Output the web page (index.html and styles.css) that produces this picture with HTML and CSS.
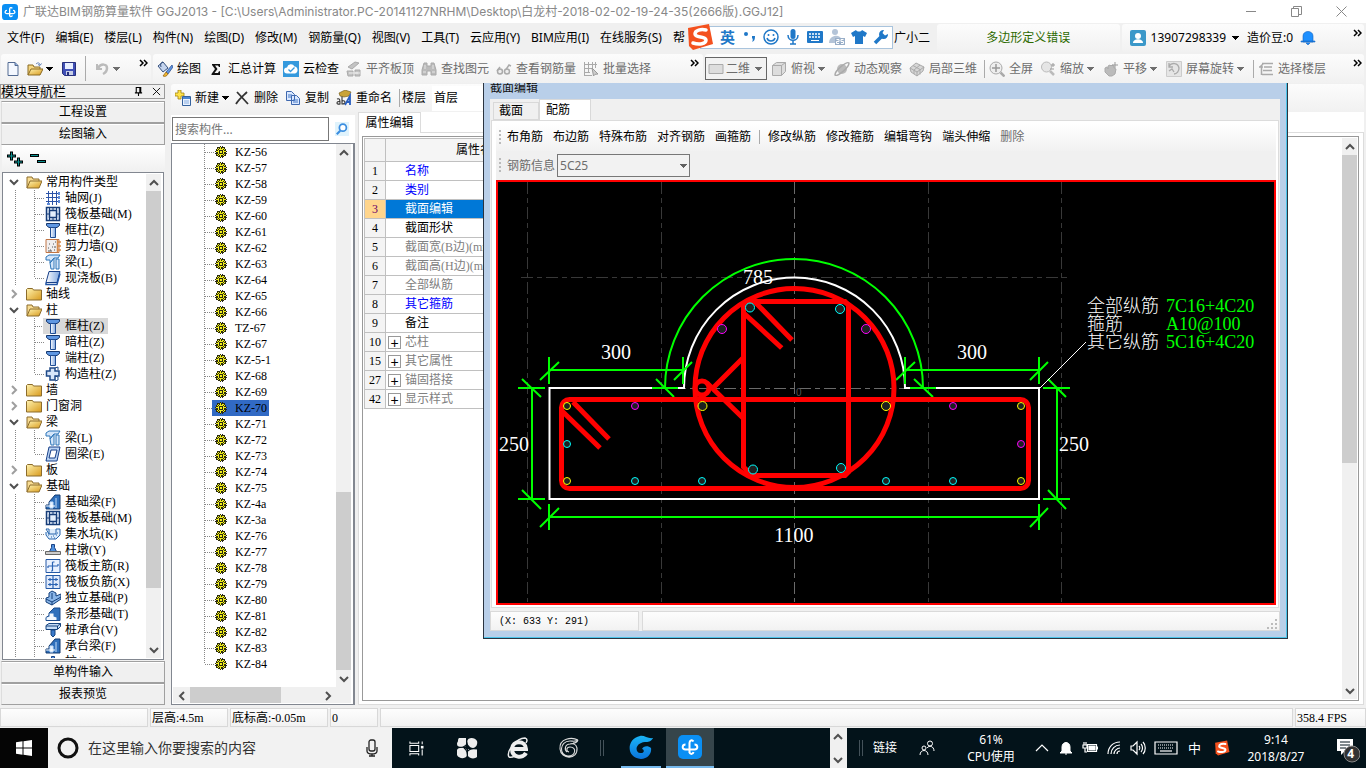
FILE: index.html
```html
<!DOCTYPE html>
<html lang="zh-CN">
<head>
<meta charset="utf-8">
<title>广联达BIM钢筋算量软件 GGJ2013</title>
<link rel="stylesheet" href="styles.css">
</head>
<body>
<svg class="defs" aria-hidden="true">
<defs>
<linearGradient id="gold" x1="0" y1="0" x2="1" y2="1"><stop offset="0" stop-color="#fff3b0"/><stop offset="1" stop-color="#d89a1c"/></linearGradient>
<linearGradient id="steel" x1="0" y1="0" x2="1" y2="0"><stop offset="0" stop-color="#fff"/><stop offset="1" stop-color="#7ea6e0"/></linearGradient>
<linearGradient id="sky" x1="0" y1="0" x2="0" y2="1"><stop offset="0" stop-color="#1ab4f5"/><stop offset="1" stop-color="#0a74dc"/></linearGradient>
</defs>
<symbol id="app" viewBox="0 0 24 24"><rect width="24" height="24" rx="5" fill="#0a8ff4"/><path d="M15.500 6.500c-1.500-2-4-1.200-4 1.500v10M7.500 9.500c-3.500 0-4 5 0 5h9c4 0 3.500-5 0-5M11.500 17c.3 2.500 3.500 2.500 4 0" fill="none" stroke="#fff" stroke-width="2"/></symbol>
<symbol id="new" viewBox="0 0 16 16"><path d="M3 1.500h7l3 3v10H3z" fill="#f4f8ff" stroke="#526a92"/><path d="M10 1.500v3h3" fill="#8fb0e0" stroke="#526a92"/></symbol>
<symbol id="open" viewBox="0 0 16 16"><path d="M1 14V4h5l1 2h6v3" fill="#f5d680" stroke="#8a6a22"/><path d="M1 14l3-6h12l-3 6z" fill="url(#gold)" stroke="#8a6a22"/><path d="M9 3c2-2 4-1 4 1m-2-.5l2 1 1.500-2" fill="none" stroke="#5d7fb8"/></symbol>
<symbol id="save" viewBox="0 0 16 16"><path d="M1.500 1.500h13v13h-11l-2-2z" fill="#3f4fb5" stroke="#27307c"/><path d="M4 2h8v6H4z" fill="#e8efff"/><path d="M5 10h7v4H5z" fill="#c8cfe6"/><path d="M6 11h2v3H6z" fill="#27307c"/></symbol>
<symbol id="undo" viewBox="0 0 16 16"><path d="M3 3v5h5" fill="none" stroke="#bbb" stroke-width="2"/><path d="M4 7c3-5 9-4 9 0 0 3-2 5-4 6" fill="none" stroke="#bbb" stroke-width="2.500"/></symbol>
<symbol id="bucket" viewBox="0 0 16 16"><path d="M1 5l5-4 5 6-5 4z" fill="#c4d4ee" stroke="#35507e"/><path d="M6 1c-2 0-3 2-2 5" fill="none" stroke="#35507e"/><path d="M15 4l-6 7 2 2 5-7z" fill="#5f94e0" stroke="#24488a" stroke-width=".7"/><path d="M9 11l-3 4c2 1 4 0 5-2z" fill="#f0b830" stroke="#8a5a10" stroke-width=".7"/></symbol>
<symbol id="sigma" viewBox="0 0 16 16"><path d="M4 3h8v3h-1L10 4.500H7L9.500 8 6.500 12H10l1-1.700h1V14H3.500v-1L7 8 4 4z" fill="#111"/></symbol>
<symbol id="cloud" viewBox="0 0 16 16"><path d="M0 0h16v16H0z" fill="#3499dd"/><path d="M4 12.500a3 3 0 010-6 4 4 0 017.500-1A3.600 3.600 0 0112 12.500z" fill="#fff"/><path d="M5.500 8.500l2 2 4-4" fill="none" stroke="#3499dd" stroke-width="1.300"/></symbol>
<symbol id="gslab" viewBox="0 0 16 16"><path d="M2 6l7-5 4 1-7 6zM1 10h6v5H2zM9 9h5v6H9z" fill="#c3c3c3" stroke="#aaa"/><path d="M3 12h9M9 12h5" stroke="#eee"/></symbol>
<symbol id="gbino" viewBox="0 0 16 16"><path d="M3 2h3v3h4V2h3l2 7v5h-5v-4H6v4H1V9z" fill="#bbb" stroke="#aaa"/><path d="M2 11h3M11 11h3M4 4v4M12 4v4" stroke="#e5e5e5"/></symbol>
<symbol id="gglass" viewBox="0 0 16 16"><path d="M1 10l3-4M9 10l4-6 2 1" fill="none" stroke="#aaa" stroke-width="1.500"/><circle cx="4" cy="10.500" r="2.500" fill="#eee" stroke="#aaa" stroke-width="1.500"/><circle cx="11" cy="10.500" r="2.500" fill="#eee" stroke="#aaa" stroke-width="1.500"/></symbol>
<symbol id="gsel" viewBox="0 0 16 16"><path d="M1.500 1v14M5.500 1v10M9.500 1v6M1 3.500h13M1 7.500h9M1 11.500h6M12.500 1v6M1 14.500h8" fill="none" stroke="#aaa"/><path d="M9 7l6 6-3 .3L10.500 15z" fill="#ccc" stroke="#999"/></symbol>
<symbol id="grect" viewBox="0 0 16 16"><path d="M1 3.500h14v9H1z" fill="#ddd" stroke="#aaa"/></symbol>
<symbol id="gcube" viewBox="0 0 16 16"><path d="M1.500 4.500l4-3h9v9l-4 4h-9z" fill="#ddd" stroke="#aaa"/><path d="M1.500 4.500h9v10M10.500 4.500l4-3" fill="none" stroke="#aaa"/></symbol>
<symbol id="gorb" viewBox="0 0 16 16"><circle cx="8" cy="8" r="5" fill="#bbb"/><path d="M1 14c2 2 14-7 14-12-2-2-14 7-14 12z" fill="none" stroke="#aaa" stroke-width="1.500"/></symbol>
<symbol id="g3d" viewBox="0 0 16 16"><path d="M1 7l6-5 8 4-1 4-6 5-6-4z" fill="#d6d6d6" stroke="#aaa"/><path d="M4 4.500l7 4 0 5M1 7l7 4 7-5M8 11v4M11 4L5 9v4" fill="none" stroke="#aaa"/></symbol>
<symbol id="gfull" viewBox="0 0 16 16"><circle cx="7" cy="7" r="6" fill="#eee" stroke="#aaa"/><path d="M7 3v8M3 7h8" stroke="#999" stroke-width="1.500"/><path d="M11.500 11.500l4 4" stroke="#aaa" stroke-width="2.500"/></symbol>
<symbol id="gzoom" viewBox="0 0 16 16"><circle cx="6.500" cy="6" r="5" fill="#e5e5e5" stroke="#bbb"/><path d="M10 10l4 4" stroke="#bbb" stroke-width="2.500"/><path d="M11 4h4M13 2v4M10 8h4" stroke="#999"/></symbol>
<symbol id="ghand" viewBox="0 0 16 16"><path d="M2 7l2-1 1 2V5l2-1 1 1 1-1 2 1v2l2 1-1 5-3 2H6l-4-4z" fill="#bbb" stroke="#aaa"/><path d="M12 1v6M9 4h6" stroke="#999"/></symbol>
<symbol id="grot" viewBox="0 0 16 16"><path d="M.5.500h15v15H.5z" fill="#e5e5e5" stroke="#ccc"/><path d="M3 5c3-4 9-3 10 2 0 3-2 6-5 6M3 2v4h4M3 10l3-2 2 3" fill="none" stroke="#aaa" stroke-width="1.300"/></symbol>
<symbol id="gfloor" viewBox="0 0 16 16"><path d="M4 2.500h11M6 6h8M5 9.500h9M4 13.500h11M2 6l3-3M3.500 6v8M1 6h4" fill="none" stroke="#aaa" stroke-width="1.500"/></symbol>
<symbol id="add" viewBox="0 0 16 16"><path d="M3 0h3v3h3v3H6v3H3V6H0V3h3z" fill="#ffe34a" stroke="#a28410" stroke-width=".8"/><path d="M7.500 6.500h8v9h-8z" fill="#eaf2ff" stroke="#35629e"/><path d="M8 7h7v2H8z" fill="#4c86d2"/><path d="M9 11h5M9 13h5" stroke="#88aee0"/></symbol>
<symbol id="del" viewBox="0 0 16 16"><path d="M3 2l11 12M13 2C9 6 5 9 2 14" fill="none" stroke="#333" stroke-width="1.800"/></symbol>
<symbol id="copy" viewBox="0 0 16 16"><path d="M1.500 1.500h5l3 3v6h-8zM6.500 5.500h5l3 3v6h-8z" fill="#dbe9ff" stroke="#3f68ae"/><path d="M3 5h4M3 7h3M8 10h5M8 12h5" stroke="#4779c5"/></symbol>
<symbol id="ren" viewBox="0 0 16 16"><path d="M3 3l6-3 6 2-2 4-5 1-4-1z" fill="#c9a338" stroke="#6a5418" stroke-width=".6"/><path d="M1 9c3-1 3 1 3 5-4 1-4-3 0-2.500M6 6.500V14c4 .5 4-4.500 0-3" fill="none" stroke="#333" stroke-width="1.100"/><path d="M9 15l5-9v9M10.500 12H14" fill="none" stroke="#2a5fc0" stroke-width="1.800"/></symbol>
<symbol id="find" viewBox="0 0 16 16"><path d="M0 0h16v16H0z" fill="#e0f3fc"/><circle cx="9" cy="6.500" r="4" fill="#fff" stroke="#3b8ee0" stroke-width="2"/><path d="M6 10l-4 4" stroke="#3b8ee0" stroke-width="2.500"/></symbol>
<symbol id="fopen" viewBox="0 0 16 16"><path d="M1 14V3h5l1 2h6v3" fill="#f8dc92" stroke="#8c6c2c"/><path d="M1 14l3-7h12l-3 7z" fill="url(#gold)" stroke="#8c6c2c"/></symbol>
<symbol id="fclosed" viewBox="0 0 16 16"><path d="M.5 3.500l1-1h5l1 1.500h8v10H.5z" fill="url(#gold)" stroke="#8c6c2c"/></symbol>
<symbol id="grid" viewBox="0 0 16 16"><path d="M3.500 1v14M7.500 1v14M11.500 1v14M1 3.500h14M1 7.500h14M1 11.500h14" stroke="#2d54a8"/><path d="M13 2h2v3h-2zM13 6h2v3h-2zM13 10h2v3h-2zM2 13h3v2H2z" fill="#5d8ad8"/></symbol>
<symbol id="raft" viewBox="0 0 16 16"><path d="M1.500 1.500h13v13h-13zM4.500 4.500h7v7h-7z" fill="#e4eefb" stroke="#173d78" stroke-width="1.500"/><path d="M4.500 1v3M8 1v3M11.500 1v3M4.500 12v3M8 12v3M11.500 12v3M1 8h3M12 8h3" stroke="#173d78"/></symbol>
<symbol id="col" viewBox="0 0 16 16"><path d="M1.500 1.500h13v2L12 5.500H4l-2.500-2z" fill="#5f97e2" stroke="#16386f"/><path d="M5.500 5.500h5v10h-5z" fill="url(#steel)" stroke="#1f4d94"/></symbol>
<symbol id="wall" viewBox="0 0 16 16"><path d="M1 1.500h13v13H1z" fill="#f1eeee" stroke="#c07545"/><path d="M12.500 2v12M13 4h3M13 8h3M13 12h3" stroke="#d88a4a" stroke-width="1.500"/><path d="M3 10h1M5 12h1M7 9h1M9 12h1M4 6h1M8 6h1M10 4h1M3 13h4M9 9h2" stroke="#555"/></symbol>
<symbol id="beam" viewBox="0 0 16 16"><path d="M1 3l3-2h11l-2 3H9L5 9V6H1zM5 9l4-5v11H6zM11 5h3v10h-3z" fill="#d4e6fa" stroke="#2d75b8"/></symbol>
<symbol id="slab" viewBox="0 0 16 16"><path d="M4 1.500h11l-3 11H1z" fill="url(#steel)" stroke="#173f88"/><path d="M1 12.500v2h11l3-11" fill="none" stroke="#2054a5" stroke-width="1.500"/></symbol>
<symbol id="cross" viewBox="0 0 16 16"><path d="M5 2h5v3h4v5h-4v4H5v-4H1.500V5H5z" fill="#d8e6fa" stroke="#1f4a88" stroke-width="1.500"/><path d="M10 2l3-1v3M10 10l3 1v3l-3 1" fill="none" stroke="#1f4a88"/></symbol>
<symbol id="ring" viewBox="0 0 16 16"><path d="M4 1h11l-3 14H1z" fill="#b9d3f4" stroke="#173f88"/><path d="M6 4h6l-2 8H4z" fill="#fff" stroke="#173f88"/></symbol>
<symbol id="fbeam" viewBox="0 0 16 16"><path d="M1 15v-4h3V8l6-7h5v14z" fill="#2f70bc" stroke="#123a70"/><path d="M5 8h3v6H5zM11 4v10" fill="#e8f3ff" stroke="#c7dffa"/><path d="M1 12h9" stroke="#fff"/></symbol>
<symbol id="pit" viewBox="0 0 16 16"><path d="M1 3h3v5h7V3h4M1 6v3l3 4h7l4-4V3M4 8L1 3" fill="#ddecfb" stroke="#2665ad"/><path d="M3 9h1M6 11h1M8 10h1M11 9h1M9 12h1M12 7h1" stroke="#2665ad"/></symbol>
<symbol id="pier" viewBox="0 0 16 16"><path d="M6.500 2.500h3v3l2 4h-7l2-4z" fill="#4f90de" stroke="#1a4386"/><path d="M.5 9.500h15v3H.5z" fill="#ccc" stroke="#666"/></symbol>
<symbol id="rmain" viewBox="0 0 16 16"><path d="M1 1.500h14v13H1z" fill="#e9f1ff" stroke="#2459a6"/><path d="M7.500 4v9M7.500 4h2M3 8h10M3 8v2M13 8V6M7.500 13H6" fill="none" stroke="#2a63b4" stroke-width="1.200"/></symbol>
<symbol id="rneg" viewBox="0 0 16 16"><path d="M1 1.500h14v13H1z" fill="#dfe9fa" stroke="#2459a6"/><path d="M8 2v12M3 5.500h10M3 10.500h10M5 4v3M11 4v3M5 9v3M11 9v3" fill="none" stroke="#2a63b4" stroke-width="1.200"/></symbol>
<symbol id="iso" viewBox="0 0 16 16"><path d="M1 8l3-1V3l3-2 4 2v3l5-2v5l-9 6-6-3z" fill="#8ab6e8" stroke="#123e7a"/><path d="M1 9l6 3 9-5M7 12v3M7 3v6" fill="none" stroke="#123e7a"/></symbol>
<symbol id="strip" viewBox="0 0 16 16"><path d="M1 14.500v-3l3-2V7l5-5h6v12.500z" fill="#2f70bc" stroke="#1b4a8b"/><path d="M1.500 14v-2.500l3-1V7.500h4v3l3 1V14z" fill="#f2f8ff"/></symbol>
<symbol id="pile" viewBox="0 0 16 16"><path d="M1 3.500l3-2h11.500v3l-3 3H1z" fill="#c5dcf6" stroke="#14437f"/><path d="M1 4h11.500l3-2.500M12.500 4v3" fill="none" stroke="#14437f"/><path d="M6 8h4v5l-2 2-2-2z" fill="#3a7aca" stroke="#14437f"/></symbol>
<symbol id="gear" viewBox="0 0 12 12"><g shape-rendering="crispEdges"><path d="M3 1h2V0h1v1h1V0h1v1h2v2h1v2h1v1h-1v1h1v1h-1v2H9v1H8v1H7v-1H6v1H5v-1H3v-1H1V8H0V7h1V6H0V5h1V3h1V1z" fill="#2a2a10"/><path d="M3 2h1v1H3zM5 1h1v2H5zM7 2h2v1H7zM1 5h2v1H1zM9 5h2v1H9zM2 3h1v1H2zM9 3h1v1H9zM3 4h1v4H3zM8 4h1v4H8zM4 3h4v1H4zM4 8h4v1H4zM5 9h1v2H5zM2 8h1v1H2zM9 8h1v1H9zM3 9h1v1H3zM8 9h1v1H8zM5 5h2v2H5z" fill="#f2f01c"/></g></symbol>
<symbol id="up" viewBox="0 0 10 10"><path d="M1 7l4-4 4 4" fill="none" stroke="#505050" stroke-width="2"/></symbol>
<symbol id="down" viewBox="0 0 10 10"><path d="M1 3l4 4 4-4" fill="none" stroke="#505050" stroke-width="2"/></symbol>
<symbol id="left" viewBox="0 0 10 10"><path d="M7 1L3 5l4 4" fill="none" stroke="#505050" stroke-width="2"/></symbol>
<symbol id="right" viewBox="0 0 10 10"><path d="M3 1l4 4-4 4" fill="none" stroke="#505050" stroke-width="2"/></symbol>
<symbol id="more" viewBox="0 0 9 8"><path d="M1 1l3 3-3 3M5 1l3 3-3 3" fill="none" stroke="#000" stroke-width="1.500"/></symbol>
<symbol id="sogou" viewBox="0 0 28 28"><path d="M2 5l21-4 4 20-20 6-4-4z" fill="#f4511e"/><path d="M20 7c-5-1-11 0-11 4s11 2 11 6-7 5-13 3" fill="none" stroke="#fff" stroke-width="3.500" stroke-linecap="round"/></symbol>
</svg>

<header class="titlebar">
<svg class="ic"><use href="#app"/></svg>
<h1>广联达BIM钢筋算量软件 GGJ2013 - [C:\Users\Administrator.PC-20141127NRHM\Desktop\白龙村-2018-02-02-19-24-35(2666版).GGJ12]</h1>
<div class="winbtns">
<button aria-label="最小化"><svg viewBox="0 0 11 11"><path d="M0 5.500h10" stroke="#888"/></svg></button>
<button aria-label="还原"><svg viewBox="0 0 11 11"><path d="M.5 2.500h7v8h-7zM2.500 2.500v-2h8v8h-3" fill="none" stroke="#888"/></svg></button>
<button aria-label="关闭"><svg viewBox="0 0 11 11"><path d="M.5.500l10 10M10.500.500l-10 10" stroke="#888"/></svg></button>
</div>
</header>

<div class="menubar">
<nav class="menu"><button>文件(F)</button><button>编辑(E)</button><button>楼层(L)</button><button>构件(N)</button><button>绘图(D)</button><button>修改(M)</button><button>钢筋量(Q)</button><button>视图(V)</button><button>工具(T)</button><button>云应用(Y)</button><button>BIM应用(I)</button><button>在线服务(S)</button><button aria-label="帮助">帮</button></nav>
<button class="xiaoer">广小二</button>
<div class="band notice">多边形定义错误</div>
<div class="band account">
<svg class="ic"><rect width="16" height="16" rx="2" fill="#3b98c9"/><circle cx="8" cy="6" r="3" fill="#fff"/><path d="M3 13c0-5 10-5 10 0z" fill="#fff"/></svg>
<button>13907298339<i class="arr"></i></button><span>造价豆:0</span>
<svg class="ic bell"><path d="M3 12V6c0-6 10-6 10 0v6zM1 11h14v1H1zM6 13h4l-2 2z" fill="#1e90ff" stroke="#1565c0" stroke-width=".6"/></svg>
<button class="morebtn" aria-label="更多"><svg><use href="#more"/></svg></button>
</div>
<div class="ime">
<svg class="logo"><use href="#sogou"/></svg>
<b>英</b>
<svg viewBox="0 0 16 16"><circle cx="5" cy="5" r="2"/><path d="M11 7h3c0 4-1 5-3 6 1-2 1-3 0-4z"/></svg>
<svg viewBox="0 0 16 16"><circle cx="8" cy="8" r="7" fill="none" stroke="#1f78c8" stroke-width="1.500"/><circle cx="5.500" cy="6" r="1"/><circle cx="10.500" cy="6" r="1"/><path d="M4 9c1 4 7 4 8 0" fill="none" stroke="#1f78c8" stroke-width="1.500"/></svg>
<svg viewBox="0 0 16 16"><rect x="5.500" y="0" width="5" height="10" rx="2.500"/><path d="M3 6c0 7 10 7 10 0M8 11v4M5 15h6" fill="none" stroke="#1f78c8" stroke-width="1.500"/></svg>
<svg viewBox="0 0 16 16"><rect x="0" y="2" width="16" height="12" rx="1"/><path d="M2 5h12M2 8h12" stroke="#fff" stroke-dasharray="2 1" stroke-width="1.500"/><path d="M4 11.500h8" stroke="#fff"/></svg>
<svg viewBox="0 0 16 16"><circle cx="6" cy="3" r="3" fill="#b4c4d8"/><path d="M0 14c0-9 12-9 12-4v4z" fill="#b4c4d8"/><path d="M6 9h10v7H6z" fill="#98aec8"/><path d="M7.500 10.500H10v2H7.500v2H10M14.500 10.500H12v2h2.500v2H12" fill="none" stroke="#fff"/></svg>
<svg viewBox="0 0 16 16"><path d="M5 1c1 2 5 2 6 0l5 3-2 4-2-1v8H4V7L2 8 0 4z"/></svg>
<svg viewBox="0 0 16 16"><path d="M2 14l7-7" stroke="#1f78c8" stroke-width="3.500"/><path d="M15 5a4.500 4.500 0 11-4-4L9.500 4 12 6.500z"/></svg>
</div>
</div>

<div class="toolbars">
<div class="band tb1">
<button aria-label="新建"><svg class="ic"><use href="#new"/></svg></button><button aria-label="打开"><svg class="ic"><use href="#open"/></svg><i class="arr"></i></button><button aria-label="保存"><svg class="ic"><use href="#save"/></svg></button><span class="vs"></span><button class="dim" aria-label="撤销"><svg class="ic"><use href="#undo"/></svg><i class="arr"></i></button><button class="morebtn" aria-label="更多"><svg><use href="#more"/></svg></button>
</div>
<div class="band tb2">
<button class="tool"><svg class="ic"><use href="#bucket"/></svg>绘图</button><button class="tool"><svg class="ic"><use href="#sigma"/></svg>汇总计算</button><button class="tool"><svg class="ic"><use href="#cloud"/></svg>云检查</button><button class="tool dim"><svg class="ic"><use href="#gslab"/></svg>平齐板顶</button><button class="tool dim"><svg class="ic"><use href="#gbino"/></svg>查找图元</button><button class="tool dim"><svg class="ic"><use href="#gglass"/></svg>查看钢筋量</button><button class="tool dim"><svg class="ic"><use href="#gsel"/></svg>批量选择</button><button class="morebtn" aria-label="更多"><svg><use href="#more"/></svg></button>
</div>
<div class="band tb3">
<label class="view dim"><svg class="ic"><use href="#grect"/></svg><select aria-label="视图模式"><option>二维</option></select><i class="arr"></i></label><button class="tool dim"><svg class="ic"><use href="#gcube"/></svg>俯视<i class="arr"></i></button><button class="tool dim"><svg class="ic"><use href="#gorb"/></svg>动态观察</button><button class="tool dim"><svg class="ic"><use href="#g3d"/></svg>局部三维</button><span class="vs"></span><button class="tool dim"><svg class="ic"><use href="#gfull"/></svg>全屏</button><button class="tool dim"><svg class="ic"><use href="#gzoom"/></svg>缩放<i class="arr"></i></button><button class="tool dim"><svg class="ic"><use href="#ghand"/></svg>平移<i class="arr"></i></button><button class="tool dim"><svg class="ic"><use href="#grot"/></svg>屏幕旋转<i class="arr"></i></button><span class="vs"></span><button class="tool dim last"><svg class="ic"><use href="#gfloor"/></svg>选择楼层</button><button class="morebtn" aria-label="更多"><svg><use href="#more"/></svg></button>
</div>
</div>

<main class="work">
<aside class="nav">
<div class="navhead"><span>模块导航栏</span><button aria-label="固定"><svg viewBox="0 0 10 10"><path d="M2.500 6V.5h5V6M1 6.500h8M5 7v3M6.500 1v5" fill="none" stroke="#000" stroke-width="1.200"/></svg></button><button aria-label="关闭"><svg viewBox="0 0 10 10"><path d="M1 1l8 8M9 1L1 9" stroke="#000"/></svg></button></div>
<button class="sect">工程设置</button>
<button class="sect">绘图输入</button>
<div class="navtools">
<button aria-label="全部展开"><svg viewBox="0 0 16 16"><path d="M0 5h9M4.500.500v9M7 11h9M11.500 6.500v9" stroke="#000" stroke-width="3"/><path d="M1 5h7M4.500 1.500v7M8 11h7M11.500 7.500v7" stroke="#0a9090"/></svg></button>
<button aria-label="全部折叠"><svg viewBox="0 0 16 16"><path d="M0 4.500h9M7 10.500h9" stroke="#000" stroke-width="3"/><path d="M1 4.500h7M8 10.500h7" stroke="#0a9090"/></svg></button>
</div>
<div class="treebox">
<ul class="tree">
<li class="br"><svg class="ch"><use href="#down"/></svg><svg class="ic"><use href="#fopen"/></svg>常用构件类型</li>
<li><span><svg class="ic"><use href="#grid"/></svg>轴网(J)</span></li>
<li><span><svg class="ic"><use href="#raft"/></svg>筏板基础(M)</span></li>
<li><span><svg class="ic"><use href="#col"/></svg>框柱(Z)</span></li>
<li><span><svg class="ic"><use href="#wall"/></svg>剪力墙(Q)</span></li>
<li><span><svg class="ic"><use href="#beam"/></svg>梁(L)</span></li>
<li class="last"><span><svg class="ic"><use href="#slab"/></svg>现浇板(B)</span></li>
<li class="br shut"><svg class="ch"><use href="#right"/></svg><svg class="ic"><use href="#fclosed"/></svg>轴线</li>
<li class="br"><svg class="ch"><use href="#down"/></svg><svg class="ic"><use href="#fopen"/></svg>柱</li>
<li><span class="on"><svg class="ic"><use href="#col"/></svg>框柱(Z)</span></li>
<li><span><svg class="ic"><use href="#col"/></svg>暗柱(Z)</span></li>
<li><span><svg class="ic"><use href="#col"/></svg>端柱(Z)</span></li>
<li class="last"><span><svg class="ic"><use href="#cross"/></svg>构造柱(Z)</span></li>
<li class="br shut"><svg class="ch"><use href="#right"/></svg><svg class="ic"><use href="#fclosed"/></svg>墙</li>
<li class="br shut"><svg class="ch"><use href="#right"/></svg><svg class="ic"><use href="#fclosed"/></svg>门窗洞</li>
<li class="br"><svg class="ch"><use href="#down"/></svg><svg class="ic"><use href="#fopen"/></svg>梁</li>
<li><span><svg class="ic"><use href="#beam"/></svg>梁(L)</span></li>
<li class="last"><span><svg class="ic"><use href="#ring"/></svg>圈梁(E)</span></li>
<li class="br shut"><svg class="ch"><use href="#right"/></svg><svg class="ic"><use href="#fclosed"/></svg>板</li>
<li class="br"><svg class="ch"><use href="#down"/></svg><svg class="ic"><use href="#fopen"/></svg>基础</li>
<li><span><svg class="ic"><use href="#fbeam"/></svg>基础梁(F)</span></li>
<li><span><svg class="ic"><use href="#raft"/></svg>筏板基础(M)</span></li>
<li><span><svg class="ic"><use href="#pit"/></svg>集水坑(K)</span></li>
<li><span><svg class="ic"><use href="#pier"/></svg>柱墩(Y)</span></li>
<li><span><svg class="ic"><use href="#rmain"/></svg>筏板主筋(R)</span></li>
<li><span><svg class="ic"><use href="#rneg"/></svg>筏板负筋(X)</span></li>
<li><span><svg class="ic"><use href="#iso"/></svg>独立基础(P)</span></li>
<li><span><svg class="ic"><use href="#strip"/></svg>条形基础(T)</span></li>
<li><span><svg class="ic"><use href="#pile"/></svg>桩承台(V)</span></li>
<li><span><svg class="ic"><use href="#fbeam"/></svg>承台梁(F)</span></li>
<li><span><svg class="ic"><use href="#pier"/></svg>桩(U)</span></li>
</ul>
<div class="sb"><button aria-label="向上"><svg><use href="#up"/></svg></button><i class="thumb nav-thumb"></i><i class="gap nav-gap"></i><button aria-label="向下"><svg><use href="#down"/></svg></button></div>
</div>
<button class="sect">单构件输入</button>
<button class="sect">报表预览</button>
</aside>

<section class="right">
<div class="band comp">
<button class="tool"><svg class="ic"><use href="#add"/></svg>新建<i class="arr"></i></button><button class="tool"><svg class="ic"><use href="#del"/></svg>删除</button><button class="tool"><svg class="ic"><use href="#copy"/></svg>复制</button><button class="tool"><svg class="ic"><use href="#ren"/></svg>重命名</button><span class="vs"></span><label for="floor">楼层</label><select id="floor"><option>首层</option></select>
</div>
<div class="cols">
<section class="listcol">
<div class="search"><input type="text" placeholder="搜索构件..." aria-label="搜索构件"><button aria-label="搜索"><svg class="ic"><use href="#find"/></svg></button></div>
<div class="listbox">
<div class="listmain">
<ul class="kz">
<li><span><svg><use href="#gear"/></svg>KZ-56</span></li><li><span><svg><use href="#gear"/></svg>KZ-57</span></li><li><span><svg><use href="#gear"/></svg>KZ-58</span></li><li><span><svg><use href="#gear"/></svg>KZ-59</span></li><li><span><svg><use href="#gear"/></svg>KZ-60</span></li><li><span><svg><use href="#gear"/></svg>KZ-61</span></li><li><span><svg><use href="#gear"/></svg>KZ-62</span></li><li><span><svg><use href="#gear"/></svg>KZ-63</span></li><li><span><svg><use href="#gear"/></svg>KZ-64</span></li><li><span><svg><use href="#gear"/></svg>KZ-65</span></li><li><span><svg><use href="#gear"/></svg>KZ-66</span></li><li><span><svg><use href="#gear"/></svg>TZ-67</span></li><li><span><svg><use href="#gear"/></svg>KZ-67</span></li><li><span><svg><use href="#gear"/></svg>KZ-5-1</span></li><li><span><svg><use href="#gear"/></svg>KZ-68</span></li><li><span><svg><use href="#gear"/></svg>KZ-69</span></li><li><span class="on"><svg><use href="#gear"/></svg>KZ-70</span></li><li><span><svg><use href="#gear"/></svg>KZ-71</span></li><li><span><svg><use href="#gear"/></svg>KZ-72</span></li><li><span><svg><use href="#gear"/></svg>KZ-73</span></li><li><span><svg><use href="#gear"/></svg>KZ-74</span></li><li><span><svg><use href="#gear"/></svg>KZ-75</span></li><li><span><svg><use href="#gear"/></svg>KZ-4a</span></li><li><span><svg><use href="#gear"/></svg>KZ-3a</span></li><li><span><svg><use href="#gear"/></svg>KZ-76</span></li><li><span><svg><use href="#gear"/></svg>KZ-77</span></li><li><span><svg><use href="#gear"/></svg>KZ-78</span></li><li><span><svg><use href="#gear"/></svg>KZ-79</span></li><li><span><svg><use href="#gear"/></svg>KZ-80</span></li><li><span><svg><use href="#gear"/></svg>KZ-81</span></li><li><span><svg><use href="#gear"/></svg>KZ-82</span></li><li><span><svg><use href="#gear"/></svg>KZ-83</span></li><li class="last"><span><svg><use href="#gear"/></svg>KZ-84</span></li>
</ul>
<div class="sb"><button aria-label="向上"><svg><use href="#up"/></svg></button><i class="gap kz-gap"></i><i class="thumb kz-thumb"></i><button aria-label="向下"><svg><use href="#down"/></svg></button></div>
</div>
<div class="hsb"><button aria-label="向左"><svg><use href="#left"/></svg></button><i class="thumb h-thumb"></i><i class="gap h-gap"></i><button aria-label="向右"><svg><use href="#right"/></svg></button></div>
</div>
</section>
<section class="props">
<div class="ptabs"><button>属性编辑</button></div>
<div class="pbody"><div class="pbox">
<table>
<thead><tr><th class="n"></th><th>属性名称</th></tr></thead>
<tbody>
<tr><td class="n">1</td><td class="blue">名称</td></tr>
<tr><td class="n">2</td><td class="blue">类别</td></tr>
<tr class="cur"><td class="n">3</td><td>截面编辑</td></tr>
<tr><td class="n">4</td><td>截面形状</td></tr>
<tr><td class="n">5</td><td class="gray">截面宽(B边)(mm)</td></tr>
<tr><td class="n">6</td><td class="gray">截面高(H边)(mm)</td></tr>
<tr><td class="n">7</td><td class="gray">全部纵筋</td></tr>
<tr><td class="n">8</td><td class="blue">其它箍筋</td></tr>
<tr><td class="n">9</td><td>备注</td></tr>
<tr><td class="n">10</td><td class="gray ex"><button aria-label="展开">+</button>芯柱</td></tr>
<tr><td class="n">15</td><td class="gray ex"><button aria-label="展开">+</button>其它属性</td></tr>
<tr><td class="n">27</td><td class="gray ex"><button aria-label="展开">+</button>锚固搭接</td></tr>
<tr><td class="n">42</td><td class="gray ex"><button aria-label="展开">+</button>显示样式</td></tr>
</tbody>
</table>
<div class="sb"><button aria-label="向上"><svg><use href="#up"/></svg></button><i class="thumb p-thumb"></i><i class="gap p-gap"></i><button aria-label="向下"><svg><use href="#down"/></svg></button></div>
</div></div>
</section>
</div>
</section>

<section class="dialog" role="dialog" aria-label="截面编辑">
<h2>截面编辑</h2>
<div class="dbody">
<div class="dtabs"><button>截面</button><button class="act">配筋</button></div>
<div class="dpage">
<div class="dtools"><i class="grip"></i><button>布角筋</button><button>布边筋</button><button>特殊布筋</button><button>对齐钢筋</button><button>画箍筋</button><span class="vs"></span><button>修改纵筋</button><button>修改箍筋</button><button>编辑弯钩</button><button>端头伸缩</button><button class="dim">删除</button></div>
<div class="dinfo"><i class="grip"></i><label for="rebar">钢筋信息</label><span class="combo"><select id="rebar"><option>5C25</option></select><i class="arr"></i></span></div>
<svg class="cad" viewBox="498 182 776 420" preserveAspectRatio="xMinYMin meet">
<g class="axis"><path d="M527.500 182v420M661.500 182v420M928.500 182v420M1061.500 182v420M521 277.500h548"/><path class="mid" d="M794.500 182v420M549 388.500h490"/></g>
<path class="outline" d="M549.500 388H684A110.500 110.500 0 01905 388H1039V499H549.500Z"/>
<g class="dimline"><path d="M665 388A129 129 0 01923 388M549 370H683M905 370h134M532 388v111M1057 388v111M549 517h490"/><path d="M549 357v27M683 357v27M905 357v27M1039 357v27M518 388h27M518 499h27M1043 388h27M1043 499h27M652 388h26M910 388h26M549 504v26M1039 504v26"/><path d="M540 380l19-18M674 380l18-18M896 380l19-18M1030 380l18-18M522 379l19 18M522 490l19 19M1048 379l18 18M1048 490l18 19M656 379l18 18M914 379l19 18M540 527l19-19M1030 527l18-19"/></g>
<g class="stirrup"><circle cx="794.500" cy="388" r="99.500"/><path d="M752 301.500H845L848.500 305V472L845 475.500H752L743.500 467V306z"/><rect x="561.500" y="399.500" width="467" height="89" rx="8"/><circle cx="702" cy="388" r="7"/><path d="M743.700 313l38 35M755 302l37 38M713 388l31-31M707 383l37 36M562 411l38 37M573 402l36 37"/></g>
<g class="bars">
<g stroke="#ff0"><circle cx="567" cy="406" r="3.500"/><circle cx="702.500" cy="406" r="4.500"/><circle cx="886" cy="406" r="4.500"/><circle cx="1021" cy="406" r="3.500"/><circle cx="567" cy="481" r="3.500"/><circle cx="1021" cy="481" r="3.500"/></g>
<g stroke="#f0f"><circle cx="635" cy="406" r="3.500"/><circle cx="722" cy="329" r="4.500"/><circle cx="866" cy="329" r="4.500"/><circle cx="953" cy="406" r="3.500"/><circle cx="1021" cy="444" r="3.500"/></g>
<g stroke="#0ff"><circle cx="750" cy="307.500" r="4.500"/><circle cx="840" cy="309" r="4.500"/><circle cx="567" cy="444" r="3.500"/><circle cx="635" cy="481" r="3.500"/><circle cx="702" cy="481" r="3.500"/><circle cx="886" cy="481" r="3.500"/><circle cx="953" cy="481" r="3.500"/><circle cx="753" cy="469.500" r="4.500"/><circle cx="841" cy="468" r="4.500"/></g>
</g>
<path class="leader" d="M1040 388l46-46"/>
<g class="num"><text x="616" y="359">300</text><text x="758" y="284">785</text><text x="972" y="359">300</text><text x="514" y="451">250</text><text x="1074" y="451">250</text><text x="794" y="542">1100</text></g>
<text class="origin" x="796" y="396">0</text>
<g class="note"><text x="1087" y="312">全部纵筋</text><text x="1087" y="330">箍筋</text><text x="1087" y="348">其它纵筋</text></g>
<g class="note val"><text x="1166" y="312">7C16+4C20</text><text x="1166" y="330">A10@100</text><text x="1166" y="348">5C16+4C20</text></g>
</svg>
</div>
<div class="dstatus"><output>(X: 633 Y: 291)</output><span><svg viewBox="0 0 12 12"><path d="M0 9h2v2H0zM4 9h2v2H4zM8 9h2v2H8zM4 5h2v2H4zM8 5h2v2H8zM8 1h2v2H8z" fill="#bbb"/></svg></span></div>
</div>
</section>
</main>

<footer class="status"><span class="s1"></span><span class="s2">层高:4.5m</span><span class="s3">底标高:-0.05m</span><span class="s4">0</span><span class="s5"></span><span class="s6">358.4 FPS</span></footer>

<div class="taskbar">
<button class="start" aria-label="开始"><svg viewBox="0 0 16 16"><path d="M0 2.200l6.500-.9v6.200H0zM7.500 1.200L16 0v7.500H7.500zM0 8.500h6.500v6.200L0 13.800zM7.500 8.500H16V16l-8.500-1.200z" fill="#fff"/></svg></button>
<div class="tsearch"><svg class="cortana" viewBox="0 0 22 22"><circle cx="11" cy="11" r="9" fill="none" stroke="#111" stroke-width="3"/></svg><input type="text" placeholder="在这里输入你要搜索的内容" aria-label="搜索"><svg class="mic" viewBox="0 0 12 18"><rect x="3" y="1" width="6" height="11" rx="2" fill="none" stroke="#222" stroke-width="1.300"/><path d="M1 8v4c0 4 10 4 10 0V8M6 15v2M3 17h6" fill="none" stroke="#222" stroke-width="1.300"/></svg></div>
<div class="apps">
<button aria-label="任务视图"><svg viewBox="0 0 24 24"><path d="M4.500 8.500h10v7h-10zM4.500 4v2h10V4M4.500 20v-2h10v2M18.500 4v3M18.500 13v7" fill="none" stroke="#fff" stroke-width="1.200"/><path d="M17 9h3v3h-3z" fill="#fff"/></svg></button>
<button aria-label="四叶草"><svg viewBox="0 0 24 24"><path d="M4 2h7v8c-3 2-9 2-9-2 0-2 1-2 1-3s0-2 1-3zM12 5c1-4 8-4 10 0 1 3-1 7-4 7-3 0-6-3-6-7zM2 14c1-3 8-3 10 0v6c-2 3-8 3-10-1zM13 13h9v8c-2 2-7 2-9-1z" fill="#eee"/><path d="M12 2c-1 5 0 8 3 10M2 11c5 1 8 0 10-3M12 22c1-5 0-8-3-10M22 13c-5-1-8 0-10 3" fill="none" stroke="#03131a" stroke-width="1.200"/></svg></button>
<button aria-label="浏览器"><svg viewBox="0 0 24 24"><path d="M20 17c-3 6-14 5-14-4S20 4 20 13H8" fill="none" stroke="#eee" stroke-width="4"/><path d="M3 21C0 16 10 2 19 2c3 1 2 3 1 5M3 21c2 1 4 0 6-1" fill="none" stroke="#eee" stroke-width="1.500"/></svg></button>
<button aria-label="浏览器"><svg viewBox="0 0 24 24"><path d="M21 4c-3 2-5 1-8 1C2 5 2 20 11 20c8 0 9-9 2-9-4 0-4 4-1 5M21 4c-6-3-19-2-18 9 1 11 18 11 17-1-1-4-4-5-7-4-5 0-6 6-3 8M21 4c-1 3-3 3-5 3" fill="none" stroke="#ddd" stroke-width="1.100"/></svg></button>
<span class="tsep"></span>
<button class="run" aria-label="广联达"><svg viewBox="0 0 24 24"><path d="M24 3c-2 4-5 4-8 4C5 8 6 19 12 18c3 0 4-3 1-4 1-3 6-4 9-1 1 5-3 11-10 11C-3 23-3 4 11 1c4-1 8 3 13 2z" fill="url(#sky)"/></svg></button>
<button class="run cur" aria-label="GGJ2013"><svg><use href="#app"/></svg></button>
</div>
<div class="tscroll"><svg><use href="#up"/></svg><svg><use href="#down"/></svg></div>
<span class="tsep links-sep"></span>
<button class="links">链接</button>
<div class="people"><svg viewBox="0 0 16 16"><circle cx="11" cy="3.500" r="2.500"/><circle cx="5" cy="8" r="2"/><path d="M1 15c0-6 8-6 8 0M8 8c2-3 7-2 7 3"/></svg></div>
<div class="two cpu"><span>61%</span><span>CPU使用</span></div>
<div class="tray">
<svg viewBox="0 0 16 16"><path d="M2 11l6-6 6 6"/></svg>
<svg viewBox="0 0 16 16"><path d="M4 11V7c0-6 8-6 8 0v4l2 2H2zM7 14h2" fill="#fff" stroke="#fff" stroke-width="1"/></svg>
<svg viewBox="0 0 16 16"><path d="M5.500 4.500h9v7h-9zM2 2v3M4 2v3M1 5h4v3H1zM3 8v4h2"/><path d="M7 6h6v4H7zM15 7h1v2h-1z" fill="#fff"/></svg>
<svg viewBox="0 0 16 16"><path d="M2 14C2 7 7 2 14 2M5 14c0-5 4-9 9-9M8 14c0-3 3-6 6-6M11 14c0-2 1-3 3-3"/></svg>
<svg viewBox="0 0 16 16"><path d="M1 6h2l4-4v12l-4-4H1zM9 6c1 1 1 3 0 4M11 4c2 2 2 6 0 8M13 2c3 3 3 9 0 12"/></svg>
<svg class="kb" viewBox="0 0 24 16"><path d="M1 2h22v12H1z"/><path d="M4 5h16M4 8h16" stroke-dasharray="1 1"/><path d="M6 11h12"/></svg>
<span class="zh">中</span>
<svg class="sg"><use href="#sogou"/></svg>
</div>
<div class="two clock"><span>9:14</span><span>2018/8/27</span></div>
<button class="noti" aria-label="通知"><svg viewBox="0 0 24 26"><path d="M1 2h16v12H9l-4 4v-4H1z" fill="#fff"/><path d="M4 5h10M4 8h10M4 11h6" stroke="#03131a"/><circle cx="16" cy="17" r="8" fill="#333" stroke="#888"/></svg><b>4</b></button>
</div>
</body>
</html>
```
FILE: styles.css
```css
* { box-sizing: border-box; }
html, body { height: 100%; margin: 0; }
body {
  display: flex; flex-direction: column; overflow: hidden;
  background: #f0f0f0; color: #000;
  font: 12px/16px "Noto Sans", "Noto Sans CJK SC", sans-serif;
}
button, input, select { font: inherit; color: inherit; border: 0; padding: 0; margin: 0; background: none; border-radius: 0; }
button { display: flex; align-items: center; white-space: nowrap; }
select { appearance: none; }
ul { list-style: none; margin: 0; padding: 0; }
svg { display: block; flex: none; }
.defs { position: absolute; width: 0; height: 0; }
.ic { width: 16px; height: 16px; }
.arr { width: 12px; height: 4px; flex: none; background: linear-gradient(#000, #000) center 0 / 7px 1px no-repeat, linear-gradient(#000, #000) center 1px / 5px 1px no-repeat, linear-gradient(#000, #000) center 2px / 3px 1px no-repeat, linear-gradient(#000, #000) center 3px / 1px 1px no-repeat; }
.dim { color: #6d6d6d; }
.dim .arr { opacity: .55; }
.vs { width: 1px; height: 18px; background: #aaa; }
.band { display: flex; align-items: center; background: linear-gradient(#fcfcfc, #f1f1f1); border-radius: 3px; }
.morebtn { align-self: flex-start; margin-left: auto; padding: 5px 0 0; }
.morebtn svg { width: 9px; height: 8px; }
.tool { gap: 4px; }
.tool .arr { margin-left: -4px; }

/* Title and menu */
.titlebar { display: flex; align-items: center; height: 23px; flex: none; background: #fff; padding-left: 2px; }
.titlebar h1 { font: 12px/16px Inter, "Noto Sans CJK SC", sans-serif; color: #888; margin: 0 0 0 5px; flex: 1; white-space: nowrap; }
.winbtns { display: flex; gap: 34px; padding-right: 19px; }
.winbtns svg { width: 11px; height: 11px; }
.menubar { display: flex; height: 30px; flex: none; position: relative; padding: 1px 2px 1px 7px; }
.menu { display: flex; gap: 11px; width: 682px; flex: none; }
.xiaoer { margin-left: 205px; width: 43px; flex: none; }
.notice { flex: 187; justify-content: center; color: #2d6a00; margin-right: 2px; }
.account { flex: 238; gap: 5px; padding: 0 2px 0 8px; }
.account .arr { margin: 0 1px 0 3px; }
.account .bell { margin-left: 2px; }
.ime { position: absolute; left: 686px; top: 0; height: 28px; display: flex; align-items: center; gap: 6px; color: #1f78c8; padding-right: 4px; }
.ime::before { content: ""; position: absolute; z-index: -1; left: 14px; right: 0; top: 3px; bottom: 2px; background: #fff; border: 1px solid #a9c4dd; }
.ime svg { width: 16px; height: 16px; fill: #1f78c8; }
.ime .logo { width: 28px; height: 28px; }
.ime b { font-size: 15px; }
.toolbars { display: flex; height: 30px; flex: none; padding: 1px 2px 0 1px; gap: 2px; }
.tb1 { width: 150px; gap: 6px; padding: 0 3px 0 4px; }
.tb1 .vs { margin: 0 2px; height: 25px; }
.tb2 { width: 550px; gap: 7px; padding: 0 4px; }
.tb3 { flex: 1; gap: 7px; padding-right: 2px; }
.tb3 .vs + .tool { margin-left: -2px; }
.tb3 .last { margin-right: -4px; }
.tb3 .dim + .vs { margin-right: -1px; }
.view { display: flex; align-items: center; width: 62px; height: 23px; border: 1px solid #666; background: #f2f2f2; padding-left: 2px; margin-right: -3px; }
.view select { width: 28px; padding-left: 2px; }

/* Workspace */
.work { flex: 1; min-height: 0; display: flex; position: relative; overflow: hidden; }
.nav { width: 165px; flex: none; display: flex; flex-direction: column; padding: 1px 0; font-family: "Liberation Serif", "Noto Sans CJK SC", sans-serif; }
.navhead { display: flex; align-items: center; height: 15px; border: 1px solid #999; margin-bottom: 2px; padding-right: 3px; gap: 9px; }
.navhead span { flex: 1; font-size: 13px; }
.navhead svg { width: 9px; height: 9px; }
.sect { height: 22px; flex: none; justify-content: center; border: 1px solid #a0a0a0; border-left-color: #ddd; background: #f0f0f0; margin: 0 0 0 1px; box-shadow: inset 0 1px #fff; }
.navtools { display: flex; align-items: center; gap: 7px; height: 27px; flex: none; padding-left: 5px; margin-left: 2px; background: linear-gradient(#fff, #f0f0f0); }
.navtools svg { width: 16px; height: 16px; }
.treebox { flex: 1; min-height: 0; display: flex; margin: 0 1px 1px 2px; border: 1px solid #828790; background: #fff; padding: 1px 2px 1px 0; }
.tree { flex: 1; overflow: hidden; }
.tree li { display: flex; height: 16px; padding-left: 40px; white-space: nowrap;
  background: repeating-linear-gradient(#888 0 1px, transparent 1px 2px) 12px 0 / 1px 16px no-repeat, repeating-linear-gradient(#888 0 1px, transparent 1px 2px) 31px 0 / 1px 16px no-repeat, repeating-linear-gradient(90deg, #888 0 1px, transparent 1px 2px) 32px 8px / 10px 1px no-repeat; }
.tree li.last { background-size: 1px 16px, 1px 8px, 10px 1px; }
.tree li.br { padding-left: 6px; align-items: center; background: none; }
.tree span { display: flex; align-items: center; gap: 4px; padding: 0 4px 0 2px; }
.tree .on { background: #d9d9d9; }
.tree li.br .ic { margin: 0 4px 0 7px; }
.ch { width: 10px; height: 10px; }
.shut .ch { opacity: .55; }
.sb { width: 15px; flex: none; display: flex; flex-direction: column; background: #f0f0f0; }
.sb button, .hsb button { height: 17px; justify-content: center; flex: none; }
.sb button svg, .hsb svg { width: 10px; height: 10px; }
.thumb { background: #cdcdcd; }
.nav-thumb { flex: 397; } .nav-gap { flex: 53; }
.kz-gap { flex: 332; } .kz-thumb { flex: 178; }
.p-thumb { flex: 310; } .p-gap { flex: 220; }
.h-thumb { flex: 92; } .h-gap { flex: 38; }

.right { flex: 1; min-width: 0; display: flex; flex-direction: column; padding: 1px 2px 0 6px; }
.comp { height: 28px; flex: none; padding-left: 4px; gap: 6px; }
.comp .tool + .tool { margin-right: 1px; }
.comp .tool:first-child { margin-right: -3px; }
.comp .vs { margin-right: -4px; }
.comp select { width: 200px; height: 25px; background: #fff; padding-left: 2px; }
.cols { flex: 1; min-height: 0; display: flex; gap: 3px; }
.listcol { width: 184px; display: flex; flex-direction: column; padding-bottom: 1px; }
.search { display: flex; align-items: center; height: 31px; flex: none; padding: 5px 0 2px 1px; background: linear-gradient(#f0f0f0 0 3px, #fff 3px); }
.search input { width: 157px; height: 24px; border: 1px solid #777; background: #fff; padding: 0 2px; }
.search input::placeholder { color: #777; opacity: 1; }
.search button { margin-left: 6px; }
.search svg { width: 14px; height: 14px; }
.listbox { flex: 1; min-height: 0; display: flex; flex-direction: column; border: 1px solid #828790; border-right-width: 2px; background: #fff; padding: 0 2px 1px 1px; }
.listmain { flex: 1; min-height: 0; display: flex; }
.kz { flex: 1; overflow: hidden; font-family: "Liberation Serif", serif; }
.kz li { display: flex; height: 16px; padding-left: 39px;
  background: repeating-linear-gradient(#888 0 1px, transparent 1px 2px) 31px 0 / 1px 16px no-repeat, repeating-linear-gradient(90deg, #888 0 1px, transparent 1px 2px) 32px 8px / 10px 1px no-repeat; }
.kz li.last { background-size: 1px 8px, 10px 1px; }
.kz span { display: flex; align-items: center; gap: 8px; padding: 0 2px 0 3px; }
.kz .on { background: #316ac5; }
.kz svg { width: 12px; height: 12px; }
.hsb { height: 16px; flex: none; display: flex; background: #f0f0f0; padding-right: 15px; }
.hsb button { width: 17px; }

.props { flex: 1; min-width: 0; display: flex; flex-direction: column; }
.ptabs { height: 21px; flex: none; display: flex; background: #fff; border-bottom: 1px solid #ddd; }
.ptabs button { width: 63px; height: 21px; justify-content: center; background: #fff; border: 1px solid #dcdcdc; border-bottom: 0; }
.pbody { flex: 1; min-height: 0; display: flex; padding: 3px; background: #fff; border: 1px solid #dcdcdc; border-top: 0; margin-bottom: 1px; }
.pbox { flex: 1; display: flex; justify-content: space-between; align-items: stretch; border: 1px solid #999; padding: 1px; margin-right: 1px; }
table { border-collapse: collapse; align-self: flex-start; font-family: "Liberation Serif", "Noto Sans CJK SC", sans-serif; table-layout: fixed; width: 400px; }
th, td { border: 1px solid #c0c0c0; padding: 0 0 0 19px; height: 19px; line-height: 16px; text-align: left; white-space: nowrap; }
th { font-weight: 400; height: 23px; background: #f5f5f5; padding: 0 0 0 70px; }
.n { width: 21px; background: #f4f4f4; padding: 0; text-align: center; }
.blue { color: #00f; } .gray { color: #808080; }
.cur td { background: #0078d7; color: #fff; }
.cur .n { background: #ffd58c; color: #6b006b; }
td.ex { padding-left: 2px; }
.ex button { display: inline-flex; width: 13px; height: 13px; margin-right: 4px; border: 1px solid #999; justify-content: center; color: #000; font: 14px/10px "Liberation Sans", sans-serif; vertical-align: text-bottom; }

/* Section editor window, floating over the workspace */
.dialog { position: absolute; z-index: 2; left: 483px; right: 78px; top: -4px; bottom: 67px; display: flex; flex-direction: column; background: #b9cfe9; border: 1px solid #2b3440; box-shadow: inset -1px -1px #4cc4ea; padding: 0 7px 7px 6px; }
.dialog h2 { font: inherit; margin: 0; height: 19px; flex: none; color: #111; }
.dbody { flex: 1; min-height: 0; display: flex; flex-direction: column; background: #f0f0f0; }
.dtabs { display: flex; align-items: flex-end; height: 21px; flex: none; padding-left: 3px; }
.dtabs button { height: 18px; width: 46px; padding-left: 5px; border: 1px solid #d9d9d9; }
.dtabs .act { height: 21px; width: 52px; background: #fff; border-bottom: 0; padding-left: 6px; }
.dpage { flex: 1; min-height: 0; display: flex; flex-direction: column; background: #fff; border: 1px solid #dcdcdc; margin: 0 1px 1px 1px; padding: 2px 2px 2px 4px; }
.dtools { display: flex; align-items: center; gap: 10px; height: 28px; flex: none; background: linear-gradient(#fff, #f1f1f1); padding-left: 3px; }
.dinfo { display: flex; align-items: center; height: 29px; flex: none; background: #f0f0f0; color: #6d6d6d; padding-left: 3px; }
.dinfo .grip { margin-right: 6px; }
.dtools .grip { margin-right: -4px; }
.grip { width: 2px; height: 15px; background: repeating-linear-gradient(#bbb 0 2px, transparent 2px 4px); }
.dtools .vs { margin: 0 -2px; height: 14px; }
.combo { display: flex; align-items: center; width: 133px; height: 23px; margin-left: 2px; border: 1px solid #777; background: #f2f2f2; }
.combo select { flex: 1; padding-left: 2px; }
.combo .arr { opacity: .6; }
.cad { flex: 1; min-height: 0; width: 100%; background: #000; border: 2px solid #f00; }
.axis { fill: none; stroke: #383838; stroke-dasharray: 12 4 5 4; }
.axis .mid { stroke: #6a6a6a; }
.outline { fill: none; stroke: #fff; stroke-width: 2; }
.dimline { fill: none; stroke: #0f0; stroke-width: 2; }
.stirrup { fill: none; stroke: #f00; stroke-width: 5; }
.bars { fill: #1c2020; stroke-width: 1; }
.leader { fill: none; stroke: #fff; stroke-width: 1; }
.num { font: 20px "Liberation Serif", serif; fill: #fff; text-anchor: middle; }
.note { font: 18px "Liberation Serif", "Noto Sans CJK SC", sans-serif; font-weight: 300; fill: #fff; }
.val { fill: #0f0; }
.origin { font: 10px "Liberation Sans", sans-serif; fill: #555; }
.dstatus { display: flex; gap: 3px; height: 22px; flex: none; padding-top: 2px; font: 10px "Liberation Mono", monospace; }
.dstatus > * { display: flex; align-items: center; border: 1px solid #dadada; background: linear-gradient(#fdfdfd, #f2f2f2); }
.dstatus output { width: 149px; padding-left: 8px; }
.dstatus span { flex: 1; justify-content: flex-end; align-items: flex-end; }
.dstatus svg { width: 12px; height: 12px; }

.status { display: flex; gap: 2px; height: 22px; flex: none; padding: 2px 0 1px; font-family: "Liberation Serif", "Noto Sans CJK SC", sans-serif; }
.status span { display: flex; align-items: center; border: 1px solid #d8d8d8; background: linear-gradient(#fdfdfd, #f2f2f2); padding-left: 1px; white-space: nowrap; }
.s1 { width: 148px; } .s2 { width: 78px; } .s3 { width: 98px; } .s4 { width: 48px; } .s5 { flex: 1; } .s6 { width: 71px; }

/* Taskbar */
.taskbar { display: flex; align-items: stretch; height: 40px; flex: none; background: #03131a; color: #fff; }
.taskbar svg { fill: none; stroke: none; }
.start { width: 48px; justify-content: center; background: #050505; }
.start svg { width: 16px; height: 16px; }
.tsearch { width: 344px; flex: none; display: flex; align-items: center; background: #f2f2f2; color: #333; padding: 0 14px 0 9px; }
.cortana { width: 22px; height: 22px; }
.tsearch input { flex: 1; min-width: 0; font-size: 14px; padding-left: 9px; }
.tsearch input::placeholder { color: #333; opacity: 1; }
.mic { width: 12px; height: 18px; }
.apps { display: flex; flex: 1; align-items: center; }
.apps button { width: 48px; height: 40px; justify-content: center; margin-right: 3px; flex: none; }
.apps svg { width: 24px; height: 24px; }
.apps button:first-child svg { width: 21px; height: 21px; }
.tsep { width: 4px; height: 16px; border: solid #44525a; border-width: 0 1px; margin: 0 17px 0 4px; align-self: center; }
.apps .run { width: 40px; border-bottom: 2px solid #76b9ed; margin-right: 5px; }
.apps .cur { width: 48px; background: #36454b; }
.tscroll { width: 17px; display: flex; flex-direction: column; align-items: center; justify-content: space-between; background: #f0f0f0; padding: 4px 0 3px; }
.tscroll svg { width: 10px; height: 10px; }
.links-sep { margin: 0 10px 0 12px; }
.links { width: 46px; }
.people { display: flex; align-items: center; width: 16px; }
.people svg { width: 16px; height: 16px; stroke: #fff; }
.two { display: flex; flex-direction: column; align-items: center; justify-content: center; line-height: 17px; white-space: nowrap; flex: none; }
.cpu { width: 86px; margin-left: 13px; }
.tray { display: flex; align-items: center; gap: 8px; flex: none; }
.tray svg { width: 16px; height: 16px; stroke: #fff; stroke-width: 1.2; }
.tray .kb { width: 24px; }
.tray .sg { stroke: none; margin-left: 5px; }
.zh { font-size: 13px; margin-left: 2px; }
.clock { width: 92px; }
.noti { position: relative; width: 44px; justify-content: center; }
.noti svg { width: 24px; height: 26px; margin: 4px 0 0 8px; }
.noti b { position: absolute; right: 12px; bottom: 6px; }
```
